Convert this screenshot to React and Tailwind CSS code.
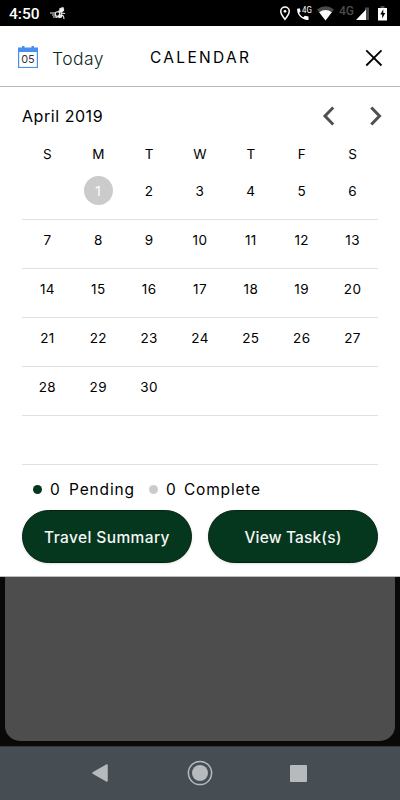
import clsx from 'clsx'

const WEEKDAYS = ['S', 'M', 'T', 'W', 'T', 'F', 'S']

// April 2019 starts on a Monday
const WEEKS = [
  [null, 1, 2, 3, 4, 5, 6],
  [7, 8, 9, 10, 11, 12, 13],
  [14, 15, 16, 17, 18, 19, 20],
  [21, 22, 23, 24, 25, 26, 27],
  [28, 29, 30, null, null, null, null],
  [null, null, null, null, null, null, null],
]

const SELECTED_DAY = 1

export default function App() {
  return (
    <div className="flex h-[800px] w-[400px] flex-col overflow-hidden bg-[#090909] font-['Inter','Liberation_Sans',sans-serif] text-black">
      <StatusBar />
      <main className="h-[551px] shrink-0 border-b border-[#bdbdbd] bg-white">
        <Header />
        <div className="px-[22px]">
          <MonthBar />
          <Calendar />
          <Legend />
          <div className="mt-[8px] flex gap-4">
            <ActionButton>
              <span className="tracking-[0.4px]">Travel Summary</span>
            </ActionButton>
            <ActionButton>
              <span className="tracking-[0.15px]">View Task(s)</span>
            </ActionButton>
          </div>
        </div>
      </main>
      <div className="mx-[5px] mb-[5px] flex-1 rounded-b-[15px] bg-[#4d4d4d]" />
      <NavBar />
    </div>
  )
}

function StatusBar() {
  return (
    <div className="flex h-[26px] shrink-0 items-center bg-black pl-[9px] font-['Roboto',sans-serif] text-white">
      <span className="mt-[3px] w-[40px] text-[15.5px] leading-none font-medium">4:50</span>
      <svg width="18" height="14" viewBox="0 0 18 14" className="mt-px" fill="none" stroke="#eee" strokeWidth="1.1">
        <path d="M1 6h5M3 8h3M4 10h3M9 4l3 1 .5 3 2 1 .5 3M11 9l-4 1.500M12 6l4 .5" />
        <circle cx="8.500" cy="7" r="2.300" />
        <path fill="#eee" d="M11 1.500l3-.8.700 2.500-2 2-2-.8zM10 8l3 .3-.5 1.700-2.500.5z" />
      </svg>
      <svg width="122" height="26" viewBox="278 0 122 26" className="ml-auto">
        <path fill="#fff" fillRule="evenodd" d="M285 6.2a5 5 0 0 0-5 5c0 3.7 5 9.3 5 9.3s5-5.600 5-9.300a5 5 0 0 0-5-5zm0 1.500a3.500 3.500 0 0 1 3.500 3.500c0 2-2.100 4.900-3.500 6.800-1.400-1.900-3.500-4.800-3.500-6.800a3.500 3.500 0 0 1 3.500-3.500z" />
        <circle cx="285" cy="11.3" r="1.4" fill="#fff" />
        <path fill="#fff" d="M297.600 8.500h2.300l.7 3-1.500 1.500c1 2 2.300 3.200 4.200 4.200l1.500-1.500 3.700.7v3.500c-6.200.4-11.400-4.300-11.400-10.600z" />
        <text x="302" y="13.200" fontSize="9.500" fill="#fff" textLength="9.800" lengthAdjust="spacingAndGlyphs">4G</text>
        <path fill="#4a4a4a" d="M317 9.600q8.500-6.600 17 0l-8.500 10.900z" />
        <path fill="#fff" d="M319.200 12.300q6.300-4.400 12.600 0l-6.300 8.200z" />
        <text x="339" y="15" fontSize="12.500" fill="#4a4a4a" fontWeight="500" textLength="15" lengthAdjust="spacingAndGlyphs">4G</text>
        <path fill="#4a4a4a" d="M365 7.500h4V20h-4z" />
        <path fill="#fff" d="M356 20l10-10.500V20z" />
        <path fill="#4a4a4a" d="M380.500 6h4v2h-4z" />
        <path fill="#fff" fillRule="evenodd" d="M378 8h9v12.500h-9zM383.300 9.300l-3 5.200h1.900v4l3-5.500h-1.900z" />
      </svg>
    </div>
  )
}

function Header() {
  return (
    <header className="flex h-[61px] items-center border-b border-[#b8b8b8] pl-[18px]">
      <svg width="20" height="22" viewBox="0 0 20 22" className="mt-[2px]">
        <path fill="#488ff0" d="M0 1.500h4V0h2.500v1.500h7V0H16v1.500h4V22H0z" />
        <path fill="#fff" d="M1.200 6h17.600v14.900H1.200z" />
        <text x="10" y="17.200" textAnchor="middle" fontSize="11" fill="#333" textLength="13.500" lengthAdjust="spacingAndGlyphs">
          05
        </text>
      </svg>
      <span className="mt-[6px] ml-[14px] w-[98px] text-[17.500px] leading-6 font-light tracking-[0.450px] text-[#0b2b1d]">Today</span>
      <h1 className="mt-[4px] text-[15.500px] leading-5 font-normal tracking-[2.300px] whitespace-nowrap">CALENDAR</h1>
      <svg width="18" height="18" viewBox="0 0 18 18" className="mt-[3px] mr-[17px] ml-auto" fill="none" stroke="#000" strokeWidth="1.8">
        <path d="M1.300 1.300l15.200 15.200M16.500 1.300L1.300 16.500" />
      </svg>
    </header>
  )
}

function MonthBar() {
  return (
    <div className="flex h-[58px] items-center">
      <h2 className="text-[16px] leading-5 font-normal tracking-[0.550px]">April 2019</h2>
      <svg width="62" height="20" viewBox="0 0 62 20" className="-mr-[6px] ml-auto" fill="none" stroke="#505050" strokeWidth="3">
        <path d="M11.200 1.500L3 10l8.200 8.500M49.300 1.500l8.200 8.500-8.200 8.500" />
      </svg>
    </div>
  )
}

function Calendar() {
  return (
    <div className="pb-px">
      <div className="grid h-[26px] grid-cols-7 place-items-center pb-px text-[13.500px] leading-4 font-normal">
        {WEEKDAYS.map((day, i) => (
          <span key={i} className="-mt-[7px]">{day}</span>
        ))}
      </div>
      {WEEKS.map((week, i) => (
        <div key={i} className="grid h-[49px] grid-cols-7 justify-items-center border-b border-[#e0e0e0] pt-[5px] text-[13.500px] font-normal tracking-[0.4px]">
          {week.map((day, j) => (
            <span
              key={j}
              className={clsx(
                'flex h-[29px] w-[29px] items-center justify-center rounded-full pt-[2px]',
                day === SELECTED_DAY && 'bg-[#cbcbcb] text-white'
              )}
            >
              {day}
            </span>
          ))}
        </div>
      ))}
    </div>
  )
}

function Legend() {
  return (
    <div className="mt-[11px] flex h-[25px] items-center pl-[11px] text-[15.500px] leading-5 font-normal">
      <span className="h-[9px] w-[9px] rounded-full bg-[#05371f]" />
      <span className="ml-[8px] w-[19px]">0</span>
      <span className="w-[80px] tracking-[0.850px]">Pending</span>
      <span className="h-[9px] w-[9px] rounded-full bg-[#cbcbcb]" />
      <span className="ml-[8px] w-[18px]">0</span>
      <span className="tracking-[0.8px]">Complete</span>
    </div>
  )
}

function ActionButton({ children }) {
  return (
    <button className="flex h-[53px] w-[170px] items-center justify-center rounded-full border border-[#02240f] bg-[#05371f] pt-[3px] text-[15.500px] font-medium whitespace-nowrap text-[#f5f5f5] shadow-sm">
      {children}
    </button>
  )
}

function NavBar() {
  return (
    <nav className="flex h-[54px] shrink-0 items-center border-t border-[#33393d] bg-[#464e54] pb-px pl-[91px]">
      <svg width="18" height="20" viewBox="0 0 18 20">
        <path fill="#b6babc" stroke="#b6babc" strokeWidth="1.500" strokeLinejoin="round" d="M16 2v16L2 10z" />
      </svg>
      <svg width="26" height="26" viewBox="0 0 26 26" className="ml-[78px]">
        <circle cx="13" cy="13" r="11.600" fill="none" stroke="#b6babc" strokeWidth="1.500" />
        <circle cx="13" cy="13" r="8" fill="#b6babc" />
      </svg>
      <span className="ml-[77px] h-[17px] w-[17px] rounded-[1px] bg-[#b6babc]" />
    </nav>
  )
}
